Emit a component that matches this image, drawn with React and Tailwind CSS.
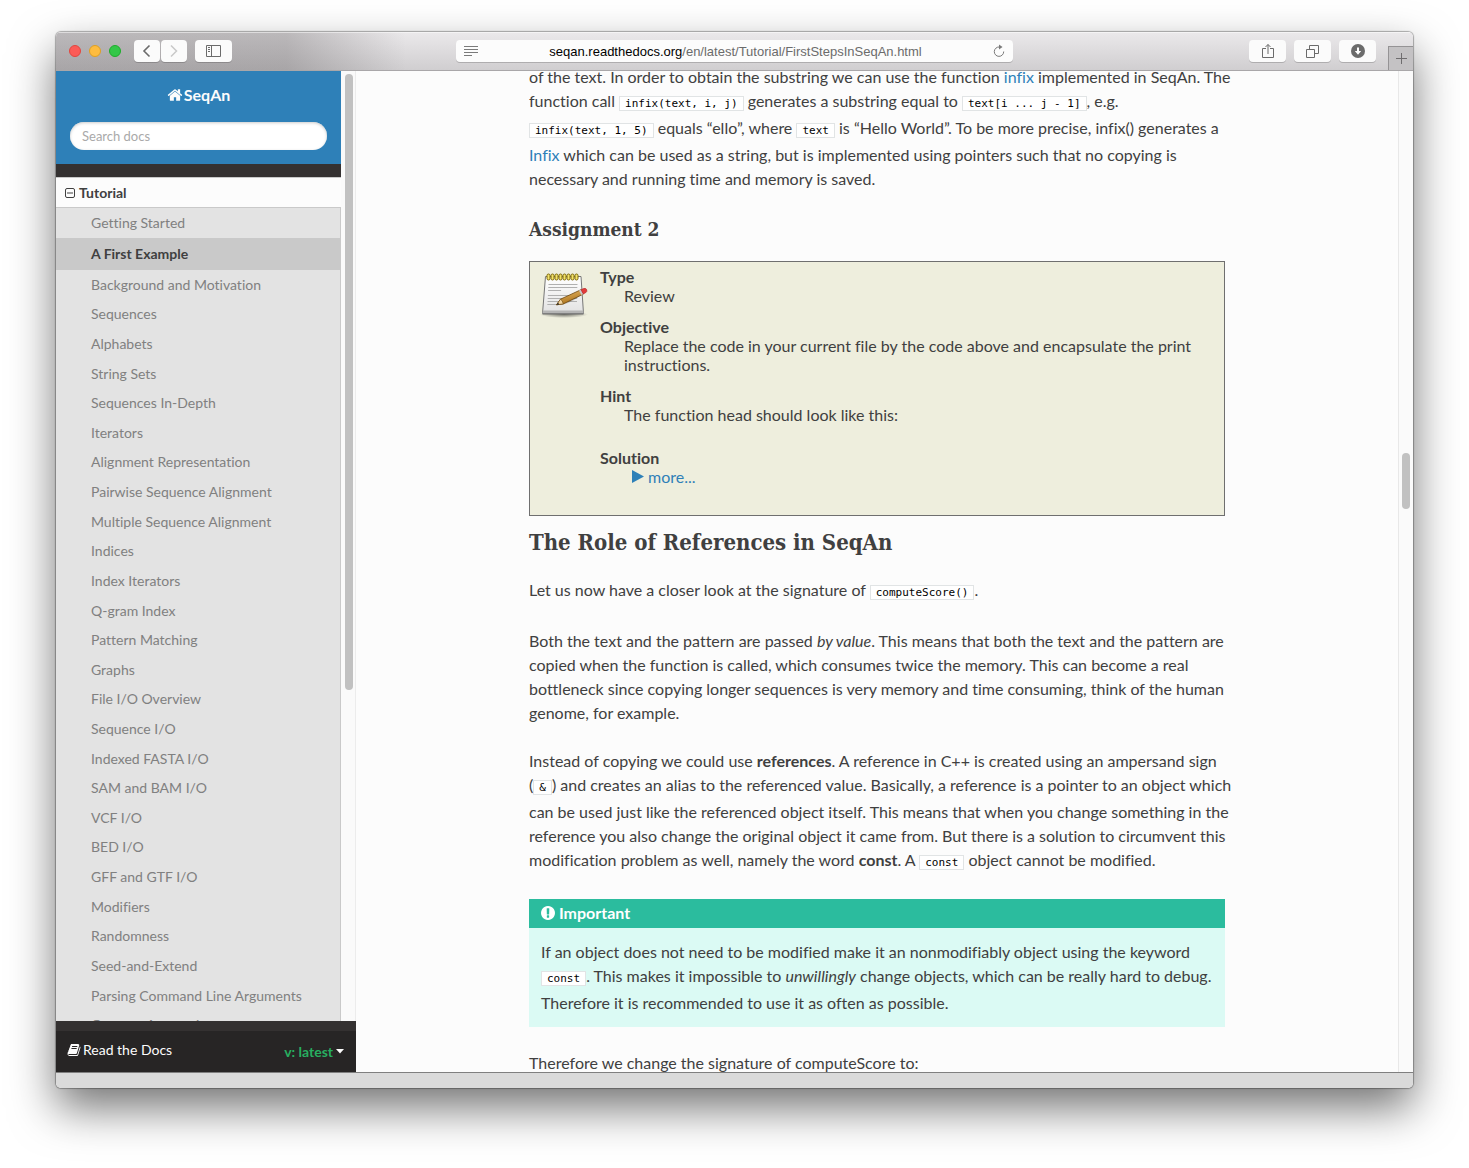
import React from "react";

const HOME =
  "M1472 992v480q0 26-19 45t-45 19h-384v-384h-256v384h-384q-26 0-45-19t-19-45v-480q0-1 .5-3t.5-3l575-474 575 474q1 2 1 6zm223-69l-62 74q-8 9-21 11h-3q-13 0-21-7l-692-577-692 577q-12 8-24 7-13-2-21-11l-62-74q-8-10-7-23.5t11-21.5l719-599q32-26 76-26t76 26l244 204v-195q0-14 9-23t23-9h192q14 0 23 9t9 23v408l219 182q10 8 11 21.5t-7 23.5z";
const BOOK =
  "M1703 478q40 57 18 129l-275 906q-19 64-76.5 107.5t-122.5 43.5h-923q-77 0-148.5-53.5t-99.5-131.5q-24-67-2-127 0-4 3-27t4-37q1-8-3-21.5t-3-19.5q2-11 8-21t16.5-23.5 16.5-23.5q23-38 45-91.5t30-91.5q3-10 .5-30t-.5-28q3-11 17-28t17-23q21-36 42-92t25-90q1-9-2.5-32t.5-28q4-13 22-30.5t22-22.5q19-26 42.5-84.5t27.5-96.5q1-8-3-25.5t-2-26.5q2-8 9-18t18-23 17-21q8-12 16.5-30.5t15-35 16-36 19.5-32 26.5-23.5 36-11.5 47.5 5.5l-1 3q38-9 51-9h761q74 0 114 56t18 130l-274 906q-36 119-71.5 153.5t-128.5 34.5h-869q-27 0-38 15-11 16-1 43 24 70 144 70h923q29 0 56-15.5t35-41.5l300-987q7-22 5-57 38 15 59 43zm-1064 2q-4 13 2 22.5t20 9.5h608q13 0 25.5-9.5t16.5-22.5l21-64q4-13-2-22.5t-20-9.5h-608q-13 0-25.5 9.5t-16.5 22.5zm-83 256q-4 13 2 22.5t20 9.5h608q13 0 25.5-9.5t16.5-22.5l21-64q4-13-2-22.5t-20-9.5h-608q-13 0-25.5 9.5t-16.5 22.5z";
const EXCLAIM =
  "M896 128q209 0 385.5 103t279.5 279.5 103 385.5-103 385.5-279.5 279.5-385.5 103-385.5-103-279.5-279.5-103-385.5 103-385.5 279.5-279.5 385.5-103zm128 1247v-190q0-14-9-23.5t-22-9.5h-192q-13 0-23 10t-10 23v188q0 13 10 23t23 10h192q13 0 22-9.5t9-23.5zm-2-344l18-621q0-12-10-18-10-8-24-8h-220q-14 0-24 8-10 6-10 18l17 621q0 10 10 17.5t24 7.5h185q14 0 23.5-7.5t10.5-17.5z";

const PAGES = [
  "Background and Motivation", "Sequences", "Alphabets", "String Sets", "Sequences In-Depth",
  "Iterators", "Alignment Representation", "Pairwise Sequence Alignment",
  "Multiple Sequence Alignment", "Indices", "Index Iterators", "Q-gram Index",
  "Pattern Matching", "Graphs", "File I/O Overview", "Sequence I/O", "Indexed FASTA I/O",
  "SAM and BAM I/O", "VCF I/O", "BED I/O", "GFF and GTF I/O", "Modifiers", "Randomness",
  "Seed-and-Extend", "Parsing Command Line Arguments", "Genome Annotations",
];

function Glyph({ d, className, viewBox = "0 0 1792 1792" }) {
  return (
    <svg viewBox={viewBox} fill="currentColor" className={className} aria-hidden="true">
      <path d={d} />
    </svg>
  );
}

function Code({ children }) {
  return (
    <code className="border border-[#e1e4e5] bg-white px-[5px] font-['DejaVu_Sans_Mono',monospace] text-[11px] leading-[25px] text-black whitespace-nowrap">
      {children}
    </code>
  );
}

function ToolButton({ label, className, children }) {
  return (
    <button
      type="button"
      aria-label={label}
      className={`flex h-[22px] items-center justify-center rounded bg-[#fbfbfb] text-[#6b6b6b] shadow-[0_1px_0_rgba(0,0,0,0.18)] ${className}`}
    >
      {children}
    </button>
  );
}

function Notepad() {
  return (
    <svg viewBox="0 0 48 48" className="h-12 w-12 shrink-0" aria-hidden="true">
      <defs>
        <linearGradient id="sheet" x1="0" y1="0" x2="0" y2="1">
          <stop offset="0" stopColor="#ffffff" />
          <stop offset="1" stopColor="#e2e2e2" />
        </linearGradient>
        <linearGradient id="wood" x1="0" y1="0" x2="0.4" y2="1">
          <stop offset="0" stopColor="#f0bf6a" />
          <stop offset="1" stopColor="#a8701c" />
        </linearGradient>
        <radialGradient id="ground">
          <stop offset="0" stopColor="#000" stopOpacity="0.5" />
          <stop offset="1" stopColor="#000" stopOpacity="0" />
        </radialGradient>
      </defs>
      <ellipse cx="24" cy="43.500" rx="24" ry="3.500" fill="url(#ground)" />
      <path d="M5.500 5.500h35.500l2.500 37h-41z" fill="url(#sheet)" stroke="#777" strokeWidth="1" />
      <path d="M3 39.500h40.300l.2 3h-41z" fill="#b4b4b4" />
      <path d="M2.500 43h41" stroke="#666" strokeWidth="1" />
      <path d="M8.500 13.500h29M8.300 16.500h29M8.100 19.500h13M7.900 24.500h29.500M7.700 27.500h29.500M7.500 30.500h29.500M7.300 33.500h12" stroke="#b0b0b0" strokeWidth="1" />
      <g fill="#f3e36a" stroke="#7d6708" strokeWidth="1">
        {[7, 11, 15, 19, 23, 27, 31, 35].map((x) => (
          <rect key={x} x={x} y="3" width="3" height="6" rx="1.500" />
        ))}
      </g>
      <path d="M18 34q10 0 22-9l-3-2z" fill="#000" opacity="0.2" />
      <path d="M16.500 33.800l4-5.600 20.500-9.500 2.300 4.400-20 9.800z" fill="url(#wood)" stroke="#6e4509" strokeWidth="0.800" />
      <path d="M16.500 33.800l4-5.600q2 1 2.800 4.700z" fill="#f0d4a0" stroke="#6e4509" strokeWidth="0.600" />
      <path d="M16.500 33.800l1.600-2.300 1 1.900z" fill="#222" />
      <path d="M39 19.600l2.300-1 2.300 4.300-2.300 1.200z" fill="#c9c9c9" />
      <path d="M41 18.700l2.500-1.200q2.500-.6 3.300 1.300.6 2-1.200 3l-2.300 1.200z" fill="#e33b3b" stroke="#a81c1c" strokeWidth="0.500" />
    </svg>
  );
}

function Toolbar() {
  return (
    <header className="flex h-[39px] shrink-0 items-center justify-between border-b border-[#a9a7a9] bg-[linear-gradient(to_right,rgba(60,55,57,0.27)_230px,rgba(60,55,57,0)_350px),linear-gradient(to_bottom,#ebe9eb,#d0ced0)] shadow-[inset_0_1px_0_rgba(255,255,255,0.5)]">
      <div className="flex flex-1 items-center">
        <div className="ml-[13px] flex gap-2">
          <button type="button" aria-label="Close" className="size-3 rounded-full border border-[#e2463f] bg-[#fc5b57]" />
          <button type="button" aria-label="Minimize" className="size-3 rounded-full border border-[#dfa023] bg-[#fdbc40]" />
          <button type="button" aria-label="Zoom" className="size-3 rounded-full border border-[#1dad2b] bg-[#33c748]" />
        </div>
        <div className="ml-[13px] flex gap-px">
          <ToolButton label="Back" className="w-[26px]">
            <svg viewBox="0 0 10 14" className="h-3.5 w-2.5" fill="none" stroke="currentColor" strokeWidth="1.600"><path d="M7.500 1.500L2 7l5.500 5.500" /></svg>
          </ToolButton>
          <ToolButton label="Forward" className="w-[26px]">
            <svg viewBox="0 0 10 14" className="h-3.5 w-2.5" fill="none" stroke="#c9c9c9" strokeWidth="1.500"><path d="M2 1.500L7.500 7 2 12.500" /></svg>
          </ToolButton>
        </div>
        <ToolButton label="Show sidebar" className="ml-2 w-[37px]">
          <svg viewBox="0 0 15 12" className="h-3 w-[15px]" fill="none" stroke="currentColor"><path d="M.5.5h14v11H.5zM5.500.5v11M2 2.500h2M2 4.500h2M2 6.500h2" /></svg>
        </ToolButton>
      </div>
      <div className="flex h-[22px] w-[41%] items-center rounded bg-[#fcfcfc] px-2 shadow-[0_1px_0_rgba(0,0,0,0.18)]">
        <svg viewBox="0 0 14 10" className="h-2.5 w-3.5" stroke="#7a7a7a"><path d="M0 .5h14M0 3.500h14M0 6.500h14M0 9.500h8" /></svg>
        <div className="flex-1 pt-0.5 text-center font-['Liberation_Sans',sans-serif] text-[13px] leading-5 text-[#6b6b6b]">
          <span className="text-black">seqan.readthedocs.org</span>/en/latest/Tutorial/FirstStepsInSeqAn.html
        </div>
        <button type="button" aria-label="Reload">
          <svg viewBox="0 0 12 14" className="h-3.5 w-3" fill="none" stroke="#7a7a7a"><path d="M6.500 3A4.700 4.700 0 1 0 10.700 7.500" /><path d="M6 .5L9.500 3 6 5.500z" fill="#7a7a7a" stroke="none" /></svg>
        </button>
      </div>
      <div className="flex flex-1 items-center justify-end gap-2 self-stretch">
        <ToolButton label="Share" className="w-[37px]">
          <svg viewBox="0 0 12 16" className="h-4 w-3" fill="none" stroke="currentColor"><path d="M4 5.500H.5v9h11v-9H8M6 11V1.500M3.500 4L6 1.500 8.500 4" /></svg>
        </ToolButton>
        <ToolButton label="Show all tabs" className="w-[37px]">
          <svg viewBox="0 0 13 13" className="size-[13px]" fill="none" stroke="currentColor"><path d="M.5 4.500h8v8h-8zM3.500 4V.5h9v8H9" /></svg>
        </ToolButton>
        <ToolButton label="Downloads" className="w-[37px]">
          <svg viewBox="0 0 14 14" className="size-3.5"><circle cx="7" cy="7" r="7" fill="#6b6b6b" /><path d="M6 3.500h2V7h2.200L7 10.800 3.800 7H6z" fill="#fff" /></svg>
        </ToolButton>
        <button type="button" aria-label="New tab" className="ml-1 flex h-6 w-[25px] items-center justify-center self-end border-t border-l border-[#959395] bg-[#c4c2c4]">
          <svg viewBox="0 0 11 11" className="size-[11px]" stroke="#6f6d6f"><path d="M5.500 0v11M0 5.500h11" /></svg>
        </button>
      </div>
    </header>
  );
}

function Sidebar() {
  return (
    <aside className="flex w-[300px] shrink-0 flex-col">
      <div className="flex min-h-0 flex-1 overflow-hidden">
        <nav className="min-w-0 flex-1">
          <div className="bg-[#2e80b8] px-3.5 pt-3 pb-3.5">
            <a href="#home" className="flex h-6 items-center justify-center gap-px text-base font-bold text-[#fcfcfc]">
              <Glyph d={HOME} className="size-4" />
              SeqAn
            </a>
            <input
              type="text"
              aria-label="Search docs"
              placeholder="Search docs"
              className="mt-[15px] block h-7 w-full rounded-full bg-white px-3 text-[13px] shadow-[inset_0_1px_3px_#ccc] placeholder:text-[#a9a9a9]"
            />
          </div>
          <div className="h-[13px] bg-[#343131]" />
          <a href="#tutorial" className="flex h-[31px] items-center gap-1 border-y border-[#c9c9c9] bg-[#fcfcfc] pl-[9px] text-sm font-bold text-[#404040]">
            <svg viewBox="0 0 10 10" className="size-2.5" fill="none" stroke="currentColor"><rect x=".5" y=".5" width="9" height="9" rx="1.500" /><path d="M2 5h6" /></svg>
            Tutorial
          </a>
          <div className="border-r border-[#c9c9c9] bg-[#e3e3e3] text-sm text-[#808080]">
            <a href="#getting-started" className="flex h-[30px] items-center pl-[35px]">Getting Started</a>
            <a href="#first-example" className="flex h-8 items-center bg-[#c9c9c9] pl-[35px] font-bold text-[#404040]">A First Example</a>
            <ul className="grid h-[770px] auto-rows-fr">
              {PAGES.map((p) => (
                <li key={p} className="flex items-center pl-[35px]">
                  <a href="#page">{p}</a>
                </li>
              ))}
            </ul>
          </div>
        </nav>
        <div className="w-[15px] border-r border-[#ececec] bg-[#fafafa] pt-[3px] pl-1">
          <div className="h-[65%] w-2 rounded-full bg-[#c1c1c1]" />
        </div>
      </div>
      <div className="flex h-[51px] shrink-0 items-center justify-between border-t-[10px] border-[#343131] bg-[#272525] pr-3 pl-[11px] text-sm text-[#fcfcfc]">
        <span className="flex items-center gap-0.5 pb-1">
          <Glyph d={BOOK} className="size-3.5" />
          Read the Docs
        </span>
        <button type="button" className="flex items-center gap-[3px] font-bold text-[#27ae60]">
          v: latest
          <svg viewBox="0 0 8 5" className="h-[5px] w-2" fill="#fcfcfc"><path d="M0 0h8L4 4.500z" /></svg>
        </button>
      </div>
    </aside>
  );
}

function Assignment() {
  return (
    <section className="flex gap-3 border border-[#6f6f6f] bg-[#eeeedd] pt-[5px] pr-6 pb-[17px] pl-2.5">
      <div className="pt-1"><Notepad /></div>
      <dl className="text-base leading-[19px] [&_dd]:mb-3 [&_dd]:ml-6 [&_dt]:font-bold">
        <dt>Type</dt>
        <dd>Review</dd>
        <dt>Objective</dt>
        <dd>Replace the code in your current file by the code above and encapsulate the print instructions.</dd>
        <dt>Hint</dt>
        <dd className="pb-3">The function head should look like this:</dd>
        <dt>Solution</dt>
        <dd>
          <a href="#more" className="flex items-center gap-1 pl-2 text-[#2e80b8]">
            <svg viewBox="0 0 12 13" className="h-[13px] w-3" fill="currentColor"><path d="M0 0l12 6.500L0 13z" /></svg>
            more...
          </a>
        </dd>
      </dl>
    </section>
  );
}

function Article() {
  return (
    <article className="mx-auto -mt-1.5 max-w-[696px] text-base leading-6 text-[#404040]">
      <p className="-mr-4 mb-6">
        of the text. In order to obtain the substring we can use the function{" "}
        <a href="#infix" className="text-[#2e80b8]">infix</a> implemented in SeqAn. The function call{" "}
        <Code>infix(text, i, j)</Code> generates a substring equal to <Code>text[i ... j - 1]</Code>, e.g.{" "}
        <Code>infix(text, 1, 5)</Code> equals “ello”, where <Code>text</Code> is “Hello World”. To be more
        precise, infix() generates a <a href="#Infix" className="text-[#2e80b8]">Infix</a> which can be used
        as a string, but is implemented using pointers such that no copying is necessary and running time and
        memory is saved.
      </p>
      <h3 className="mb-[18px] font-['Roboto_Slab','DejaVu_Serif_Condensed','DejaVu_Serif',serif] text-[19px] leading-7 font-bold">
        Assignment 2
      </h3>
      <Assignment />
      <h2 className="mt-2.5 mb-5 font-['Roboto_Slab','DejaVu_Serif_Condensed','DejaVu_Serif',serif] text-[22px] leading-8 font-bold">
        The Role of References in SeqAn
      </h2>
      <p className="-mr-4 mb-6">Let us now have a closer look at the signature of <Code>computeScore()</Code>.</p>
      <p className="-mr-4 mb-6">
        Both the text and the pattern are passed <em>by value</em>. This means that both the text and the
        pattern are copied when the function is called, which consumes twice the memory. This can become a
        real bottleneck since copying longer sequences is very memory and time consuming, think of the human
        genome, for example.
      </p>
      <p className="-mr-4 mb-6">
        Instead of copying we could use <strong>references</strong>. A reference in C++ is created using an
        ampersand sign (<Code>&amp;</Code>) and creates an alias to the referenced value. Basically, a
        reference is a pointer to an object which can be used just like the referenced object itself. This
        means that when you change something in the reference you also change the original object it came
        from. But there is a solution to circumvent this modification problem as well, namely the word{" "}
        <strong>const</strong>. A <Code>const</Code> object cannot be modified.
      </p>
      <section className="mb-6 bg-[#dbfaf4] px-3 pb-3">
        <h4 className="-mx-3 mb-3 flex h-[29px] items-center gap-1 bg-[#2bbc9e] px-3 pb-0.5 font-bold text-white">
          <Glyph d={EXCLAIM} viewBox="128 128 1536 1536" className="size-3.5" />
          Important
        </h4>
        <p>
          If an object does not need to be modified make it an nonmodifiably object using the keyword{" "}
          <Code>const</Code>. This makes it impossible to <em>unwillingly</em> change objects, which can be
          really hard to debug. Therefore it is recommended to use it as often as possible.
        </p>
      </section>
      <p>Therefore we change the signature of computeScore to:</p>
    </article>
  );
}

export default function App() {
  return (
    <div className="h-screen overflow-hidden bg-white px-14 pt-8 pb-20 font-[Lato,sans-serif] [font-variant-ligatures:no-common-ligatures]">
      <div className="flex h-full flex-col overflow-hidden rounded-[5px] shadow-[0_0_1px_1px_rgba(0,0,0,0.3),0_20px_45px_rgba(0,0,0,0.55)]">
        <Toolbar />
        <div className="flex min-h-0 flex-1 bg-[#fcfcfc]">
          <Sidebar />
          <main className="min-w-0 flex-1 overflow-hidden">
            <Article />
          </main>
          <div className="flex w-[15px] flex-col items-center border-l border-[#e8e8e8] bg-[#fafafa]">
            <div className="basis-[382px]" />
            <div className="h-14 w-2 rounded-full bg-[#c1c1c1]" />
          </div>
        </div>
        <footer className="h-4 shrink-0 border-t border-[#7f7f7f] bg-[#dadada]" />
      </div>
    </div>
  );
}
